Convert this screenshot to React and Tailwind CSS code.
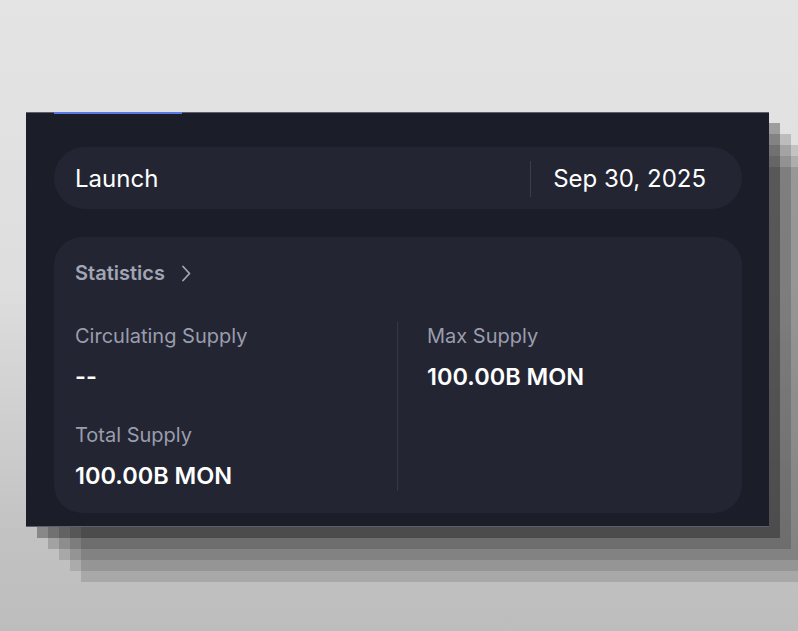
import React from 'react';

const Stat = ({ label, value }) => (
  <div className="flex flex-col">
    <span className="text-[20px] leading-[28px] text-[#9a9dad]">{label}</span>
    <span className="mt-3 text-[23.5px] leading-[30px] font-semibold text-white">{value}</span>
  </div>
);

const App = () => {
  return (
    <div
      className="w-[798px] h-[631px] overflow-hidden pt-[112px] pl-[26px] bg-[linear-gradient(180deg,#e4e4e4_0%,#dedede_45%,#c2c2c2_85%,#bdbdbd_100%)]"
      style={{ fontFamily: 'Inter, "Noto Sans", sans-serif' }}
    >
      {/* Panel */}
      <div className="relative w-[743px] h-[415px] bg-[#1b1d28] border-t border-b border-[#5d606c] pl-[28px] pr-[27px] pt-[34px] shadow-[11px_11px_0_rgba(0,0,0,0.3),22px_22px_0_rgba(0,0,0,0.16),33px_33px_0_rgba(0,0,0,0.13),44px_44px_0_rgba(0,0,0,0.11),55px_55px_0_rgba(0,0,0,0.12)]">
        <div className="absolute -top-px left-[28px] w-[128px] h-[2px] bg-[#5a78e6]" />

        {/* Launch row */}
        <div className="flex items-center h-[62px] rounded-[31px] bg-[#232532] pl-[21px] pr-[36px] pt-[2px]">
          <span className="flex-1 text-[24px] text-white">Launch</span>
          <div className="w-px h-9 bg-[#3a3d4b] mr-[22px]" />
          <span className="text-[24px] text-white">Sep 30, 2025</span>
        </div>

        {/* Statistics card */}
        <div className="mt-[28px] h-[276px] rounded-[28px] bg-[#232532] px-[21px] pt-[22px]">
          <div className="flex items-center gap-4 h-[28px]">
            <span className="text-[20px] font-semibold text-[#a2a5b4]">Statistics</span>
            <svg width="10" height="17" viewBox="0 0 10 17" fill="none">
              <path d="M2 1.5l6.5 7-6.5 7" stroke="#a2a5b4" strokeWidth="1.8" strokeLinecap="round" strokeLinejoin="round" />
            </svg>
          </div>

          <div className="mt-[35px] grid grid-cols-2">
            <div className="flex flex-col gap-[29px] border-r border-[#343745]">
              <Stat label="Circulating Supply" value="--" />
              <Stat label="Total Supply" value="100.00B MON" />
            </div>
            <div className="pl-[29px]">
              <Stat label="Max Supply" value="100.00B MON" />
            </div>
          </div>
        </div>
      </div>
    </div>
  );
};

export default App;
